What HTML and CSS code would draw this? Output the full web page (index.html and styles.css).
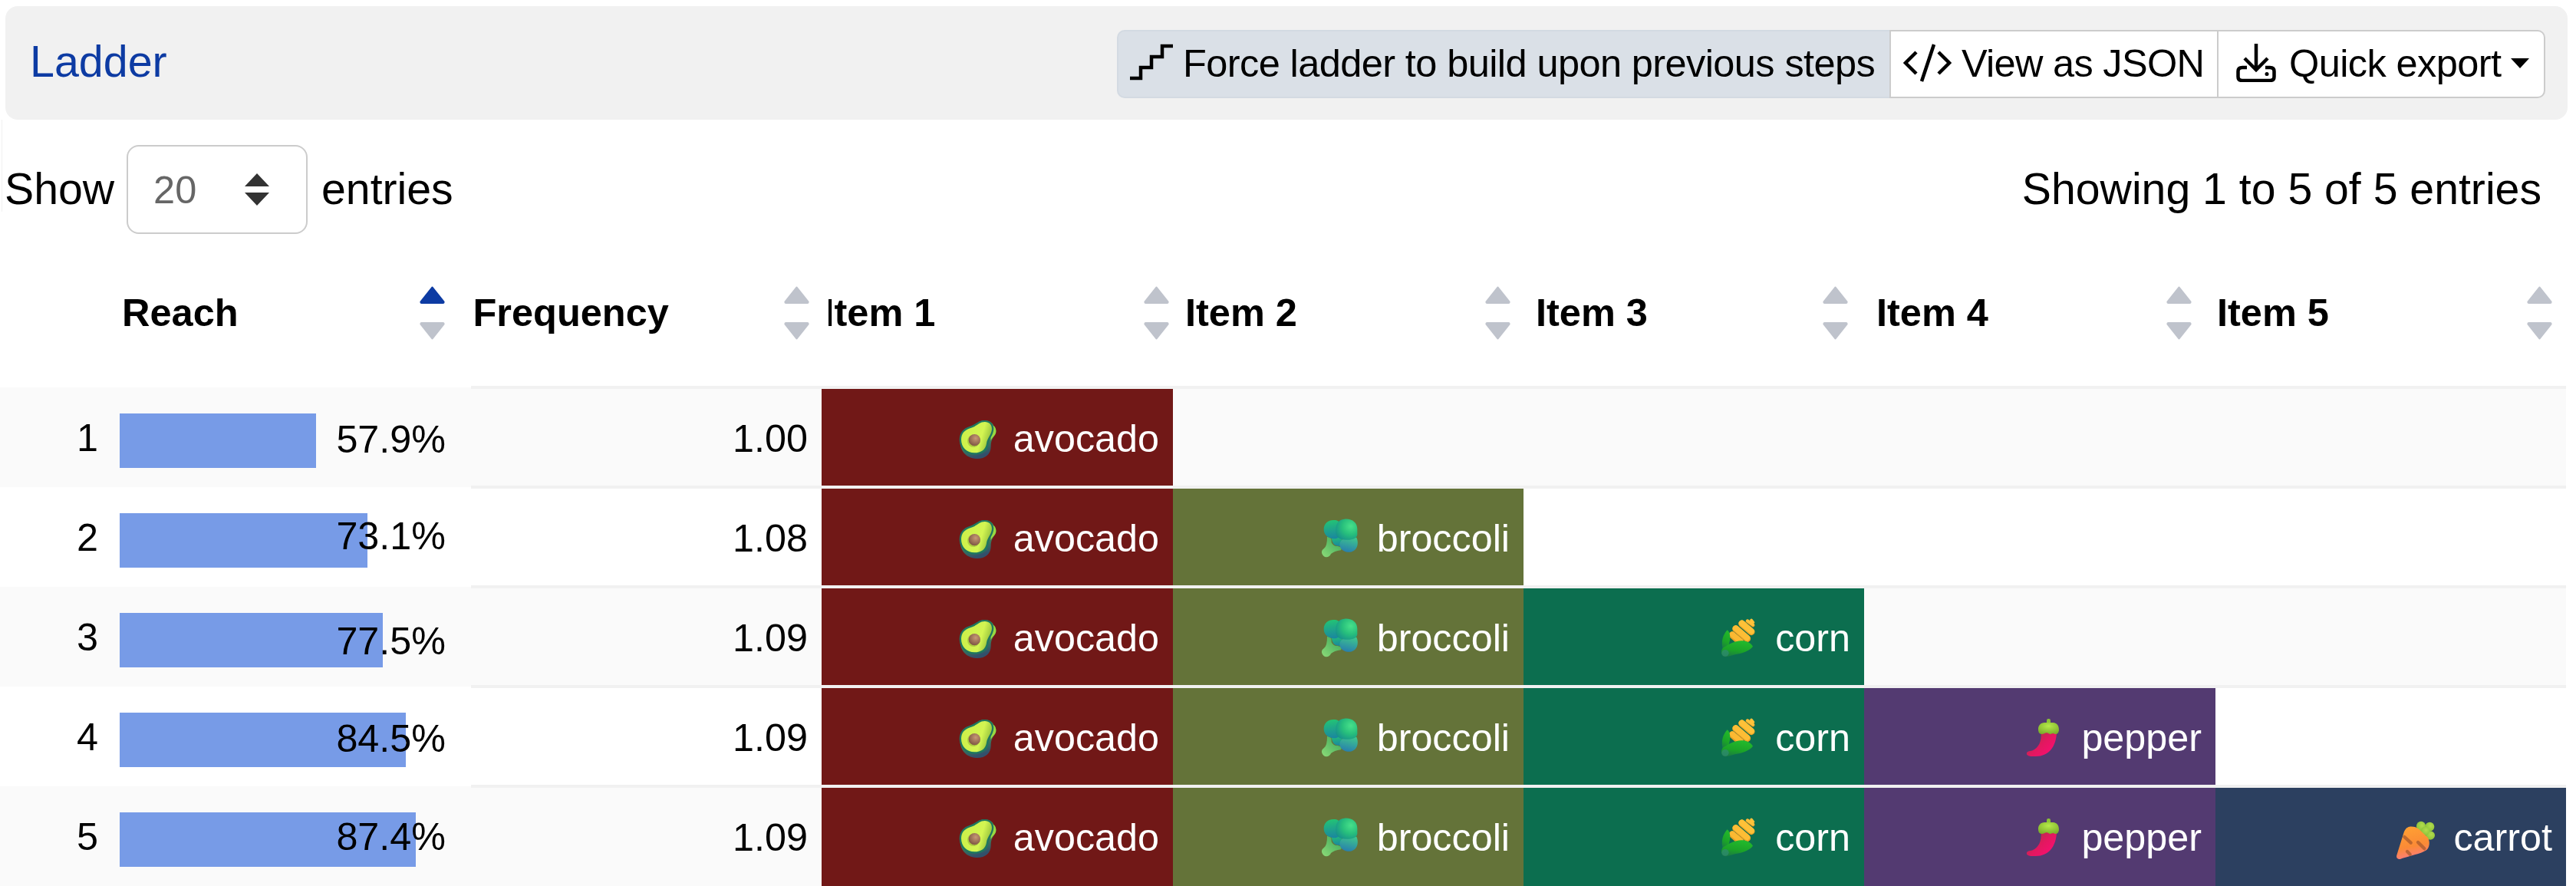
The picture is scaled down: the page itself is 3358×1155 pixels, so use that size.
FILE: index.html
```html
<!DOCTYPE html>
<html lang="en">
<head>
  <meta charset="UTF-8" />
  <meta name="viewport" content="width=device-width, initial-scale=1.0"/>
  <title>Ladder</title>
  <link rel="stylesheet" href="styles.css">
</head>
<body>

  <!-- shared icons -->
  <svg class="sprite" aria-hidden="true">
    <defs>
      <linearGradient id="avoSkin" x1="0" y1="0" x2="0.3" y2="1">
        <stop offset="0.3" stop-color="#4bb043"/><stop offset="1" stop-color="#32506b"/>
      </linearGradient>
      <linearGradient id="avoFlesh" x1="0" y1="0.5" x2="1" y2="0.8">
        <stop offset="0" stop-color="#cdf04a"/><stop offset="0.6" stop-color="#d3f552"/><stop offset="1" stop-color="#7fae35"/>
      </linearGradient>
      <radialGradient id="avoPit" cx="0.6" cy="0.35" r="0.7">
        <stop offset="0" stop-color="#c79876"/><stop offset="1" stop-color="#7a5340"/>
      </radialGradient>
      <radialGradient id="brocBig" cx="0.7" cy="0.35" r="0.8">
        <stop offset="0" stop-color="#48e08a"/><stop offset="0.5" stop-color="#27bf7c"/><stop offset="1" stop-color="#168f8c"/>
      </radialGradient>
      <linearGradient id="brocLeft" x1="0.4" y1="0" x2="0.5" y2="1">
        <stop offset="0" stop-color="#23c474"/><stop offset="1" stop-color="#1a86a0"/>
      </linearGradient>
      <linearGradient id="brocSmall" x1="0.7" y1="0" x2="0.4" y2="1">
        <stop offset="0" stop-color="#3ec58c"/><stop offset="1" stop-color="#287fae"/>
      </linearGradient>
      <linearGradient id="brocStem" x1="1" y1="0" x2="0" y2="1">
        <stop offset="0" stop-color="#35a457"/><stop offset="1" stop-color="#8ddb78"/>
      </linearGradient>
      <linearGradient id="husk" x1="0.6" y1="0" x2="0.3" y2="1">
        <stop offset="0" stop-color="#22b92c"/><stop offset="0.6" stop-color="#1ba328"/><stop offset="1" stop-color="#1b7a45"/>
      </linearGradient>
      <linearGradient id="chili" x1="0.2" y1="0.3" x2="0.8" y2="0.8">
        <stop offset="0" stop-color="#b82c4c"/><stop offset="0.45" stop-color="#e2185f"/><stop offset="1" stop-color="#f4106e"/>
      </linearGradient>
      <radialGradient id="chiliCap" cx="0.5" cy="0.3" r="0.7">
        <stop offset="0" stop-color="#b5ea4a"/><stop offset="1" stop-color="#7cae2b"/>
      </radialGradient>
      <linearGradient id="carrotBody" x1="0.4" y1="0" x2="0.6" y2="1">
        <stop offset="0" stop-color="#ffa033"/><stop offset="0.6" stop-color="#fb8a36"/><stop offset="1" stop-color="#ff7b86"/>
      </linearGradient>
      <radialGradient id="carrotTop" cx="0.6" cy="0.4" r="0.7">
        <stop offset="0" stop-color="#b2dc4c"/><stop offset="1" stop-color="#86bf37"/>
      </radialGradient>
    </defs>
    <symbol id="avocado" viewBox="69 54 168 168">
      <path fill="url(#avoSkin)" d="M184 64C205 64 217 75 219 83C230 90 232 108 226 118C217 132 209 141 209 165C209 195 188 213 156 213C127 213 104 199 94 174C82 142 92 110 120 95C155 80 160 64 184 64Z"/>
      <path fill="#98da42" d="M217 82C230 91 232 108 226 118C220 127 212 134 209 142L208 120Z"/>
      <path fill="#1f7660" d="M184 63C207 63 220 77 220 96C219 123 201 132 199 157C197 184 175 197 145 197C111 197 86 171 86 137C87 111 102 95 123 88C153 78 159 63 184 63Z"/>
      <path fill="url(#avoFlesh)" d="M185 69C203 69 213 80 213 97C212 119 195 131 192 153C189 177 171 190 145 190C115 190 93 168 93 138C93 115 106 101 128 94C157 85 162 69 185 69Z"/>
      <circle fill="#8fae34" opacity="0.55" cx="141" cy="144" r="24"/>
      <circle fill="url(#avoPit)" cx="145" cy="140" r="23"/>
    </symbol>
    <symbol id="broccoli" viewBox="54 54 168 168">
      <path fill="url(#brocStem)" d="M87 128L103 134L104 151Q112 167 128 165L145 170L141 181Q114 185 102 195C98 207 83 212 73 203C64 194 63 182 74 175Q88 164 87 128Z"/>
      <path fill="url(#brocLeft)" d="M105 124H145V165C120 167 107 158 105 136Z"/>
      <path fill="url(#brocLeft)" d="M112 63C124 62 136 67 137 80V125Q128 137 111 136C88 132 74 119 74 98C75 76 91 63 112 63Z"/>
      <path fill="url(#brocSmall)" d="M148 138L202 131C211 151 206 174 191 183C174 194 149 188 139 170C133 158 138 145 148 138Z"/>
      <path fill="url(#brocBig)" d="M155 59C186 57 205 73 205 99V119C204 133 188 141 162 140C134 140 121 129 121 111C118 79 130 61 155 59Z"/>
    </symbol>
    <symbol id="corn" viewBox="54 54 168 168">
      <g fill="none" stroke-linecap="round">
        <path stroke="#e8a026" stroke-width="26" d="M114 122L145 150"/>
        <path stroke="#fbb932" stroke-width="21" d="M115 120L148 147"/>
        <path stroke="#e8a026" stroke-width="27" d="M128 98L173 137"/>
        <path stroke="#fdbd35" stroke-width="23" d="M128 96L172 133"/>
        <path stroke="#eba528" stroke-width="27" d="M152 78L189 110"/>
        <path stroke="#ffc138" stroke-width="23" d="M152 76L189 107"/>
        <path stroke="#e79e28" stroke-width="14" d="M174 68L195 84"/>
        <path stroke="#ffc23a" stroke-width="11" d="M174 67L195 82M189 64L196 73"/>
      </g>
      <path fill="url(#husk)" d="M95 103C108 112 109 139 99 165Q92 180 78 179C68 149 79 120 95 103Z"/>
      <path fill="url(#husk)" d="M79 172C110 153 132 142 157 145C176 147 190 158 195 167C184 183 154 194 128 198C108 203 91 212 78 205C69 197 70 182 79 172Z"/>
      <ellipse fill="#2f8a74" opacity="0.7" cx="87" cy="193" rx="14" ry="13"/>
    </symbol>
    <symbol id="pepper" viewBox="81 54 168 168">
      <path fill="url(#chili)" d="M152 114H213C211 166 185 207 131 207C115 208 99 207 96 199C94 187 105 188 119 184C143 172 154 150 152 114Z"/>
      <rect fill="#8cc436" x="174" y="60" width="15" height="24" rx="7"/>
      <path fill="url(#chiliCap)" d="M164 75H199C215 77 222 87 222 105C221 115 215 121 206 120C199 113 192 120 186 120C178 115 172 113 166 117C157 121 148 121 143 113C137 94 144 77 164 75Z"/>
    </symbol>
    <symbol id="carrot" viewBox="69 174 168 168">
      <g fill="url(#carrotTop)">
        <ellipse cx="171" cy="211" rx="18" ry="20"/>
        <ellipse cx="205" cy="212" rx="18" ry="18"/>
        <ellipse cx="207" cy="246" rx="18" ry="17"/>
        <circle cx="187" cy="229" r="17"/>
      </g>
      <path fill="url(#carrotBody)" d="M126 212C143 211 153 214 163 222L197 254C207 269 205 293 192 304C174 317 120 328 89 339C79 339 73 333 76 323L103 237C108 222 115 214 126 212Z"/>
      <g fill="none" stroke="#a85a2c" stroke-opacity="0.75" stroke-width="13" stroke-linecap="round">
        <path d="M106 252L131 275"/><path d="M159 273L184 298"/><path d="M117 309L128 320"/>
      </g>
    </symbol>
    <symbol id="sort" viewBox="0 0 33 70">
      <path class="up" d="M15.200 1.500Q16.500 -0.500 17.800 1.500L32.500 20Q33 23 30.500 23H2.500Q0 23 0.500 20Z"/>
      <path class="down" d="M15.200 68.500Q16.500 70.500 17.800 68.500L32.500 50Q33 47 30.500 47H2.500Q0 47 0.500 50Z"/>
    </symbol>
  </svg>

  <div class="header">
    <div class="title">Ladder</div>
    <div class="btn-group">
      <button class="btn active">
        <svg class="icon-stairs" viewBox="0 0 56 50"><path d="M0 45H14V31H28V17H42V3H56"/></svg>
        <span>Force ladder to build upon previous steps</span>
      </button>
      <button class="btn btn-json">
        <svg class="icon-code" viewBox="0 0 64 50"><path d="M17 11L3 25L17 39M40 1L24 49M46 11L60 25L46 39"/></svg>
        <span>View as JSON</span>
      </button>
      <button class="btn btn-export">
        <svg class="icon-export" viewBox="0 0 52 50">
          <path d="M26 0V34M11 19L26 34L41 19M14 31H8Q2.500 31 2.500 36V43Q2.500 48 8 48H44Q49.500 48 49.500 43V36Q49.500 31 44 31H38"/>
          <circle cx="40" cy="39.500" r="2.500"/>
        </svg>
        <span>Quick export</span>
        <i class="caret"></i>
      </button>
    </div>
  </div>

  <div class="controls">
    <div class="length">
      <span>Show</span>
      <div class="select">
        <span>20</span>
        <svg viewBox="0 0 32 42"><path d="M16 0L32 17H0ZM16 42L32 25H0Z"/></svg>
      </div>
      <span>entries</span>
    </div>
    <div class="info">Showing 1 to 5 of 5 entries</div>
  </div>

  <div class="table">
    <div class="thead">
      <div class="th th-reach">Reach <svg class="sort asc"><use href="#sort"/></svg></div>
      <div class="th th-frequency">Frequency <svg class="sort"><use href="#sort"/></svg></div>
      <div class="th th-item1">Item 1 <svg class="sort"><use href="#sort"/></svg></div>
      <div class="th th-item2">Item 2 <svg class="sort"><use href="#sort"/></svg></div>
      <div class="th th-item3">Item 3 <svg class="sort"><use href="#sort"/></svg></div>
      <div class="th th-item4">Item 4 <svg class="sort"><use href="#sort"/></svg></div>
      <div class="th th-item5">Item 5 <svg class="sort"><use href="#sort"/></svg></div>
    </div>
    <div id="rows"></div>
  </div>

  <script>
    const items = ["avocado", "broccoli", "corn", "pepper", "carrot"];
    const steps = [
      { reach: 57.9, frequency: "1.00", nudge: "low" },
      { reach: 73.1, frequency: "1.08", nudge: "high" },
      { reach: 77.5, frequency: "1.09", nudge: "lower" },
      { reach: 84.5, frequency: "1.09", nudge: "low" },
      { reach: 87.4, frequency: "1.09", nudge: "" },
    ];

    document.getElementById("rows").innerHTML = steps.map((step, i) => `
      <div class="row">
        <div class="index">${i + 1}</div>
        <div class="reach">
          <div class="bar" style="width: ${step.reach}%"></div>
          <span class="value ${step.nudge}">${step.reach}%</span>
        </div>
        <div class="cell">${step.frequency}</div>
        ${items.map((item, j) => j <= i
          ? `<div class="cell item ${item}"><svg class="emoji"><use href="#${item}"/></svg>${item}</div>`
          : `<div class="cell"></div>`).join("")}
      </div>`).join("");
  </script>

</body>
</html>
```

FILE: styles.css
```css
* { box-sizing: border-box; margin: 0; padding: 0; }
body {
  font-family: "Liberation Sans", Arial, sans-serif;
  background: #fff;
  color: #000;
  padding-top: 8px;
  overflow: hidden;
}

.sprite {
  position: absolute;
  width: 0;
  height: 0;
}

.header {
  display: flex;
  justify-content: space-between;
  align-items: center;
  width: 3340px;
  height: 148px;
  margin-left: 7px;
  padding: 0 29px 0 32px;
  background: #f1f1f1;
  border-radius: 16px;
}

.title {
  font-size: 57.4px;
  color: #0d3ba3;
  padding-bottom: 5px;
}

.btn-group {
  display: flex;
  margin-top: 3px;
}

.btn {
  display: flex;
  align-items: center;
  width: 1007px;
  height: 89px;
  padding: 0 0 3px 15px;
  background: #fff;
  border: 2px solid #ccc;
  font-family: inherit;
  font-size: 50.5px;
  letter-spacing: -0.59px;
  color: #000;
  white-space: nowrap;
}

.btn svg {
  flex: none;
  fill: none;
  stroke: #000;
  stroke-width: 4.5;
}

.btn.active {
  background: #dae0e7;
  border-color: #d3dae2;
  border-right: none;
  border-radius: 10px 0 0 10px;
}

.btn-json {
  width: 429px;
  padding-left: 16px;
  letter-spacing: -0.7px;
}

.btn-export {
  width: 428px;
  margin-left: -2px;
  padding-left: 23px;
  border-radius: 0 10px 10px 0;
}

.icon-stairs {
  width: 56px;
  height: 50px;
  margin-right: 13px;
}

.icon-code {
  width: 64px;
  height: 50px;
  margin-right: 12px;
}

.icon-export {
  width: 52px;
  height: 50px;
  margin-right: 17px;
}

.icon-export circle {
  fill: #000;
  stroke: none;
}

.caret {
  margin-left: 13px;
  border: 12.5px solid transparent;
  border-top: 13px solid #000;
  border-bottom: 0;
}

.controls {
  display: flex;
  justify-content: space-between;
  width: 3311px;
  height: 120px;
  margin-left: 2px;
  padding-top: 33px;
  border-left: 1px solid #f1f1f1;
  font-size: 57.2px;
  line-height: 115px;
}

.length {
  display: flex;
  padding-left: 3px;
}

.select {
  display: flex;
  align-items: center;
  justify-content: space-between;
  width: 236px;
  height: 116px;
  margin: 0 18px 0 16px;
  padding: 0 48px 0 33px;
  border: 2px solid #ccc;
  border-radius: 16px;
  font-size: 50.5px;
  color: #666;
}

.select svg {
  width: 32px;
  height: 42px;
  fill: #333;
}

.table {
  width: 3345px;
  margin-top: 36px;
}

.thead {
  display: grid;
  grid-template-columns: 457.5px 463px 465.5px 457px 444px 444px 455px;
  height: 193px;
  padding-left: 159px;
  padding-bottom: 2px;
  /* rule starts after the reach column */
  background: linear-gradient(#f1f1f1, #f1f1f1) 614px 100% / 100% 2px no-repeat;
}

.th {
  display: flex;
  align-items: center;
  justify-content: space-between;
  padding-right: 21px;
  font-size: 50.5px;
  font-weight: bold;
}

.th-reach { padding-right: 37px; }
.th-frequency { padding-right: 25px; }
.th-item2 { padding-right: 33px; }
.th-item3 { padding-right: 37px; }
.th-item4 { padding-right: 33px; }
.th-item5 { padding-right: 18px; }

/* first letter runs into the column edge */
.th-item1 {
  overflow: hidden;
  text-indent: -6px;
}

.sort {
  width: 33px;
  height: 70px;
  fill: #bfc3cc;
}

.sort.asc {
  --up: #0d3ba3;
}

.up {
  fill: var(--up, #bfc3cc);
}

.row {
  display: grid;
  grid-template-columns: 156px 458px 457px 458px 457px 444px 458px 457px;
  grid-template-rows: 130px;
  font-size: 50.3px;
  line-height: 132px;
}

.row:nth-child(odd) {
  background: #fafafa;
}

.index {
  text-align: right;
  padding-right: 28px;
}

.reach {
  position: relative;
  padding: 34px 16px 24px 0;
}

.bar {
  height: 71px;
  background: #779be7;
}

/* the value lies over the bar */
.value {
  position: absolute;
  right: 33px;
  top: 0;
}

.value.low { top: 2px; }
.value.lower { top: 5px; }
.value.high { top: -2px; }

.cell {
  display: flex;
  align-items: center;
  justify-content: flex-end;
  padding: 3px 18px 0 0;
  border: 2px solid #f1f1f1;
  border-width: 2px 0;
  line-height: 120px;
}

.row:last-child .cell {
  border-bottom: none;
  padding-bottom: 2px;
}

.item {
  color: #fff;
}

.emoji {
  width: 56px;
  height: 56px;
  margin: 2px 20px 0 0;
}

.avocado { background: #711817; }
.broccoli { background: #647339; }
.corn { background: #0c6e4f; }
.pepper { background: #533a71; }
.carrot { background: #2c4060; }
```
